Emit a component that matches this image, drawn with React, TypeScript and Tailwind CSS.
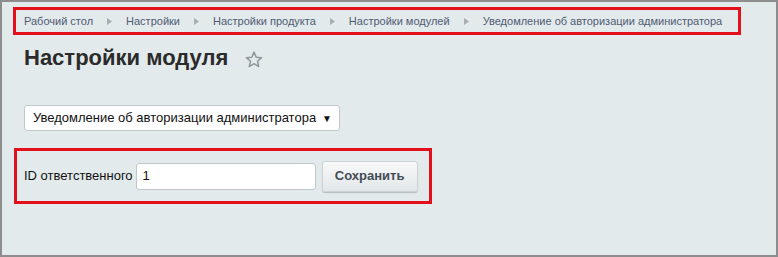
import { ReactNode } from "react";

const crumbs = [
  "Рабочий стол",
  "Настройки",
  "Настройки продукта",
  "Настройки модулей",
  "Уведомление об авторизации администратора",
];

const Arrow = () => (
  <svg width="5" height="7" viewBox="0 0 5 7" className="mx-[14px] shrink-0">
    <path d="M0 0 L5 3.5 L0 7 Z" fill="#a6adb4" />
  </svg>
);

const RedBox = ({ children, className }: { children: ReactNode; className: string }) => (
  <div className={"border-[3px] border-[#e1101b] " + className}>{children}</div>
);

export default function App() {
  return (
    <div
      className="w-[778px] h-[257px] border-2 border-[#8d8d8d] bg-[#e3eaec] overflow-hidden"
      style={{ fontFamily: '"Liberation Sans", Arial, sans-serif' }}
    >
      <RedBox className="ml-[11px] mt-[5px] w-[728px] h-[28px] flex items-center pl-[8px] whitespace-nowrap">
        {crumbs.map((c, i) => (
          <div key={c} className="flex items-center shrink-0">
            <span className="text-[11px] text-[#4f5b73] leading-none">{c}</span>
            {i < crumbs.length - 1 && <Arrow />}
          </div>
        ))}
      </RedBox>

      <div className="flex items-center ml-[22px] mt-[9px] h-[28px]">
        <h1 className="text-[22px] font-bold text-[#2b2b2b] leading-none">Настройки модуля</h1>
        <svg width="18" height="17" viewBox="0 0 24 23" className="ml-[17px] mt-[2px]">
          <path
            d="M12 1.5 L14.9 8.4 L22.3 9 L16.7 13.8 L18.4 21 L12 17.2 L5.6 21 L7.3 13.8 L1.7 9 L9.1 8.4 Z"
            fill="none"
            stroke="#8e959c"
            strokeWidth="2"
            strokeLinejoin="round"
          />
        </svg>
      </div>

      <div className="ml-[22px] mt-[33px] w-[316px] h-[26px] bg-white border border-[#c2c7cb] rounded-[3px] flex items-center justify-between pl-[8px] pr-[7px]">
        <span className="text-[13px] text-[#111]">Уведомление об авторизации администратора</span>
        <span className="text-[10px] text-[#111]">▼</span>
      </div>

      <RedBox className="ml-[12px] mt-[17px] w-[418px] h-[56px] flex items-center pl-[7px] whitespace-nowrap">
        <span className="text-[13px] text-[#111]">ID ответственного</span>
        <div className="ml-[3px] w-[180px] h-[27px] bg-white border border-[#c2c7cb] rounded-[3px] flex items-center pl-[6px]">
          <span className="text-[13px] text-[#111]">1</span>
        </div>
        <button className="ml-[6px] w-[96px] h-[31px] rounded-[3px] border border-[#cdd2d5] bg-gradient-to-b from-[#f8f9f9] to-[#e2e7e9] shadow-[0_1px_1px_rgba(0,0,0,0.2)] text-[13px] font-bold text-[#434d55]">
          Сохранить
        </button>
      </RedBox>
    </div>
  );
}
